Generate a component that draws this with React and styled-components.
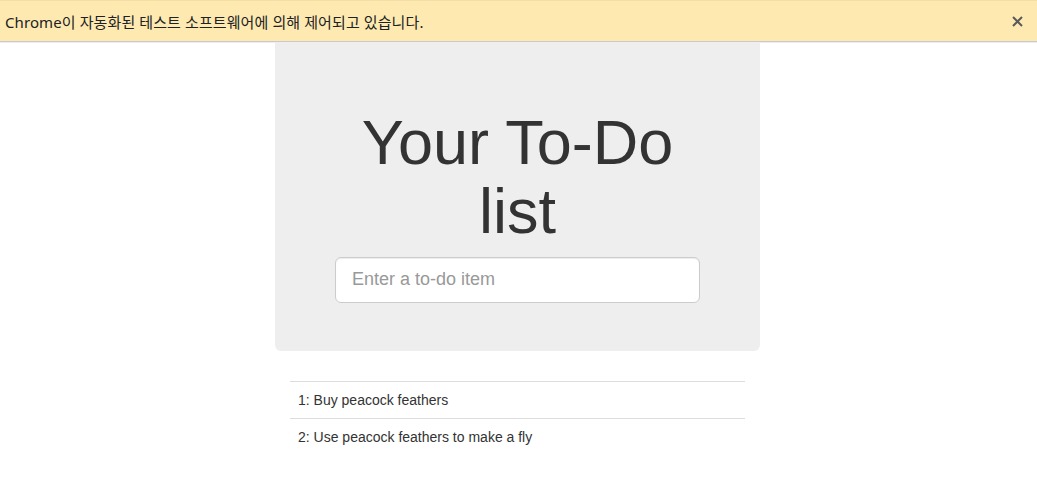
import React from "react";
import styled, { createGlobalStyle } from "styled-components";

const Global = createGlobalStyle`
  html, body { margin: 0; padding: 0; background: #fff; }
  body { font-family: "Liberation Sans", Arial, sans-serif; font-size: 14px; color: #333; }
  * { box-sizing: border-box; }
`;

const InfoBar = styled.div`
  height: 42px;
  background: #feeab1;
  border-top: 1px solid #f3dea6;
  border-bottom: 1px solid #c9c9cf;
  box-shadow: 0 1px 0 #ececf2;
  display: flex;
  align-items: center;
  justify-content: space-between;
  padding: 0 12px 0 5px;
  font-family: "Noto Sans", "Noto Sans CJK KR", sans-serif;
  font-size: 15px;
  letter-spacing: 0.1px;
  color: #202124;
`;

const InfoText = styled.span`
  line-height: 20px;
  padding-top: 1px;
`;

const CloseButton = styled.button`
  border: 0;
  background: transparent;
  padding: 0;
  width: 16px;
  height: 16px;
  display: flex;
  align-items: center;
  justify-content: center;
  cursor: pointer;
`;

const Page = styled.div`
  width: 485px;
  margin-left: calc(50% - 243.5px);
`;

const Jumbotron = styled.div`
  background: #eeeeee;
  border-radius: 0 0 6px 6px;
  padding: 46px 60px 48px;
  text-align: center;
  margin-bottom: 30px;
`;

const Title = styled.h1`
  margin: 20px 0 10px;
  font-family: "Liberation Sans", Arial, sans-serif;
  font-size: 63px;
  font-weight: 500;
  line-height: 1.1;
  color: #333;
`;

const Input = styled.input`
  display: block;
  width: 100%;
  height: 46px;
  padding: 10px 16px;
  font-family: "Liberation Sans", Arial, sans-serif;
  font-size: 18px;
  line-height: 1.33;
  color: #555;
  background: #fff;
  border: 1px solid #ccc;
  border-radius: 6px;
  box-shadow: inset 0 1px 1px rgba(0, 0, 0, 0.075);
  outline: none;
  &::placeholder { color: #999; }
`;

const Table = styled.table`
  width: calc(100% - 30px);
  margin: 0 15px;
  border-collapse: collapse;
  border-spacing: 0;
`;

const Cell = styled.td`
  padding: 8px;
  line-height: 20px;
  border-top: 1px solid #ddd;
  text-align: left;
  color: #333;
`;

const items = ["Buy peacock feathers", "Use peacock feathers to make a fly"];

export default function App() {
  return (
    <>
      <Global />
      <InfoBar>
        <InfoText>Chrome이 자동화된 테스트 소프트웨어에 의해 제어되고 있습니다.</InfoText>
        <CloseButton aria-label="닫기">
          <svg width="11" height="11" viewBox="0 0 11 11">
            <path d="M1 1 L10 10 M10 1 L1 10" stroke="#5a5a5a" strokeWidth="2" />
          </svg>
        </CloseButton>
      </InfoBar>
      <Page>
        <Jumbotron>
          <Title>Your To-Do list</Title>
          <Input placeholder="Enter a to-do item" />
        </Jumbotron>
        <Table>
          <tbody>
            {items.map((t, i) => (
              <tr key={i}>
                <Cell>{`${i + 1}: ${t}`}</Cell>
              </tr>
            ))}
          </tbody>
        </Table>
      </Page>
    </>
  );
}
